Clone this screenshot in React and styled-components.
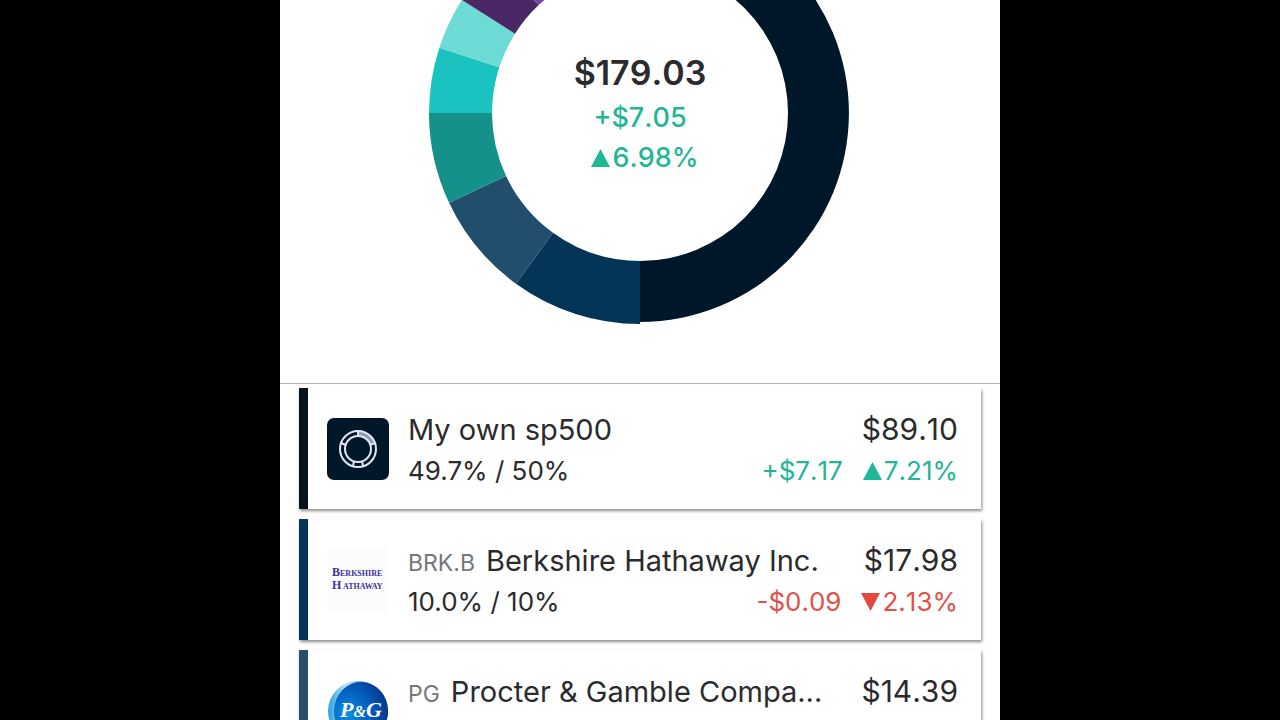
import React from "react";
import styled, { createGlobalStyle } from "styled-components";

const GlobalStyle = createGlobalStyle`
  * {
    box-sizing: border-box;
  }
  body {
    margin: 0;
    background-color: #000;
    font-family: Inter, "Liberation Sans", sans-serif;
    color: #2b2b2d;
  }
  h1, h2, p, ul {
    margin: 0;
    padding: 0;
    font-weight: 400;
  }
`;

const Screen = styled.main`
  height: 100vh;
  max-width: 720px;
  margin: 0 auto;
  overflow: hidden;
  background-color: #fff;
`;

const ChartSection = styled.section`
  display: grid;
  justify-items: center;
  padding-bottom: 59px;
  border-bottom: 1px solid #b4b4b4;
`;

const Donut = styled.svg`
  grid-area: 1 / 1;
  display: block;
`;

const Totals = styled.div`
  grid-area: 1 / 1;
  padding-top: 48px;
  text-align: center;
  font-kerning: none;
`;

const TotalValue = styled.h1`
  font-size: 34px;
  font-weight: 600;
  line-height: 50px;
`;

const TotalChange = styled.p`
  font-size: 27px;
  font-weight: 500;
  line-height: 40px;
  color: #23b695;
`;

const TotalPercent = styled(TotalChange)`
  display: flex;
  align-items: center;
  justify-content: center;
  gap: 2px;
  padding-left: 10px;
`;

const HoldingList = styled.ul`
  display: flex;
  flex-direction: column;
  gap: 10px;
  padding: 4px 19px;
  list-style: none;
`;

const Card = styled.li`
  display: flex;
  align-items: flex-start;
  gap: 19px;
  min-height: 121px;
  padding: 21px 23px 16px 19px;
  border-left: 9px solid ${(props) => props.$color};
  background-color: #fff;
  box-shadow: 1px 2px 3px rgba(0, 0, 0, 0.45);
`;

const Logo = styled.svg`
  flex: none;
  margin-top: 9px;
`;

const Details = styled.div`
  flex: 1;
  min-width: 0;
`;

const Line = styled.div`
  display: flex;
  align-items: baseline;
  justify-content: space-between;
  line-height: 41px;
  white-space: nowrap;
`;

const Name = styled.h2`
  font-size: 29px;
`;

const Ticker = styled.span`
  margin-right: 11px;
  font-size: 23px;
  line-height: 1;
  color: #77777a;
`;

const Value = styled.p`
  font-size: 30px;
  font-kerning: none;
`;

const Allocation = styled.p`
  font-size: 26px;
`;

const Change = styled.p`
  display: flex;
  gap: 20px;
  font-size: 26px;
  font-kerning: none;
  color: ${(props) => (props.$down ? "#df5149" : "#23b695")};
`;

const Percent = styled.span`
  display: flex;
  align-items: center;
  gap: 2px;
`;

const CENTER_Y = 113;
const INNER = 148;

// angles in degrees, clockwise from the top of the ring
const segments = [
  { from: 0, to: 180, color: "#001729", radius: 209 },
  { from: 180, to: 216, color: "#043456", radius: 211 },
  { from: 216, to: 244.8, color: "#214e6d", radius: 211 },
  { from: 244.8, to: 270, color: "#14918b", radius: 211 },
  { from: 270, to: 288, color: "#1ac3bf", radius: 211 },
  { from: 288, to: 302.4, color: "#6cdad5", radius: 211 },
  { from: 302.4, to: 316.8, color: "#4a2866", radius: 211 },
  { from: 316.8, to: 360, color: "#7548a0", radius: 211 },
];

const point = (angle, r) => {
  const rad = (angle * Math.PI) / 180;
  return `${r * Math.sin(rad)} ${-r * Math.cos(rad)}`;
};

const segmentPath = ({ from, to, radius }) =>
  `M${point(from, radius)} A${radius} ${radius} 0 0 1 ${point(to, radius)} ` +
  `L${point(to, INNER)} A${INNER} ${INNER} 0 0 0 ${point(from, INNER)} Z`;

const Arrow = ({ down }) => (
  <svg width="19" height="18" viewBox="0 0 19 18" aria-hidden="true">
    <path d={down ? "M0 0H19L9.5 18Z" : "M0 18H19L9.5 0Z"} fill={down ? "#e5463d" : "#1fb795"} />
  </svg>
);

const PieLogo = () => (
  <Logo width="62" height="62" viewBox="0 0 62 62" role="img" aria-label="Pie">
    <rect width="62" height="62" rx="7" fill="#001729" />
    <path d="M31 15.5A15.5 15.5 0 0 1 45.3 25" fill="none" stroke="#8f9dad" strokeWidth="5" />
    <g fill="none" stroke="#dfe9f3" strokeWidth="2">
      <circle cx="31" cy="31" r="18" />
      <circle cx="31" cy="31" r="13" />
      <path d="M31 13v5M48 25l-5 2M14 25l5 2M27 43l-1 5M35 43l1 5" />
    </g>
  </Logo>
);

const BerkshireLogo = () => (
  <Logo width="62" height="62" viewBox="0 0 62 62" role="img" aria-label="Berkshire Hathaway">
    <rect width="62" height="62" fill="#fcfcfd" />
    <g fill="#40309a" fontFamily="Liberation Serif, serif" fontWeight="700" fontSize="8">
      <text x="5" y="27">
        <tspan fontSize="12">B</tspan>ERKSHIRE
      </text>
      <text x="5" y="40">
        <tspan fontSize="12">H</tspan>
        <tspan x="16">ATHAWAY</tspan>
      </text>
    </g>
  </Logo>
);

const ProcterLogo = () => (
  <Logo width="62" height="62" viewBox="0 0 62 62" role="img" aria-label="P&G">
    <defs>
      <linearGradient id="pgRim" x1="0" y1="0" x2="1" y2="0">
        <stop offset="0" stopColor="#2f9fe0" />
        <stop offset="0.3" stopColor="#b5e3f8" />
        <stop offset="1" stopColor="#0a4db0" />
      </linearGradient>
      <radialGradient id="pgFace" cx="0.25" cy="0.55" r="0.8">
        <stop offset="0" stopColor="#0b8fe0" />
        <stop offset="0.5" stopColor="#0560bf" />
        <stop offset="1" stopColor="#03318a" />
      </radialGradient>
    </defs>
    <circle cx="31" cy="31" r="30" fill="url(#pgRim)" />
    <ellipse cx="34" cy="31" rx="27" ry="29" fill="url(#pgFace)" />
    <text
      x="34"
      y="37"
      textAnchor="middle"
      fill="#fff"
      fontFamily="Liberation Serif, serif"
      fontStyle="italic"
      fontWeight="700"
      fontSize="22"
    >
      P<tspan fontSize="16">&amp;</tspan>G
    </text>
  </Logo>
);

const holdings = [
  {
    name: "My own sp500",
    value: "$89.10",
    allocation: "49.7% / 50%",
    change: "+$7.17",
    percent: "7.21%",
    color: "#04151f",
    logo: PieLogo,
  },
  {
    ticker: "BRK.B",
    name: "Berkshire Hathaway Inc.",
    value: "$17.98",
    allocation: "10.0% / 10%",
    change: "-$0.09",
    percent: "2.13%",
    down: true,
    color: "#053454",
    logo: BerkshireLogo,
  },
  {
    ticker: "PG",
    name: "Procter & Gamble Compa...",
    value: "$14.39",
    color: "#264f6d",
    logo: ProcterLogo,
  },
];

function Holding({ item }) {
  const Icon = item.logo;
  return (
    <Card $color={item.color}>
      <Icon />
      <Details>
        <Line>
          <Name>
            {item.ticker && <Ticker>{item.ticker}</Ticker>}
            {item.name}
          </Name>
          <Value>{item.value}</Value>
        </Line>
        {item.allocation && (
          <Line>
            <Allocation>{item.allocation}</Allocation>
            <Change $down={item.down}>
              <span>{item.change}</span>
              <Percent>
                <Arrow down={item.down} />
                {item.percent}
              </Percent>
            </Change>
          </Line>
        )}
      </Details>
    </Card>
  );
}

function App() {
  return (
    <>
      <GlobalStyle />
      <Screen>
        <ChartSection>
          <Donut width="422" height="324" viewBox={`-211 ${-CENTER_Y} 422 324`} aria-hidden="true">
            {segments.map((segment) => (
              <path key={segment.from} d={segmentPath(segment)} fill={segment.color} />
            ))}
          </Donut>
          <Totals>
            <TotalValue>$179.03</TotalValue>
            <TotalChange>+$7.05</TotalChange>
            <TotalPercent>
              <Arrow />
              6.98%
            </TotalPercent>
          </Totals>
        </ChartSection>
        <HoldingList>
          {holdings.map((item) => (
            <Holding key={item.name} item={item} />
          ))}
        </HoldingList>
      </Screen>
    </>
  );
}

export default App;
